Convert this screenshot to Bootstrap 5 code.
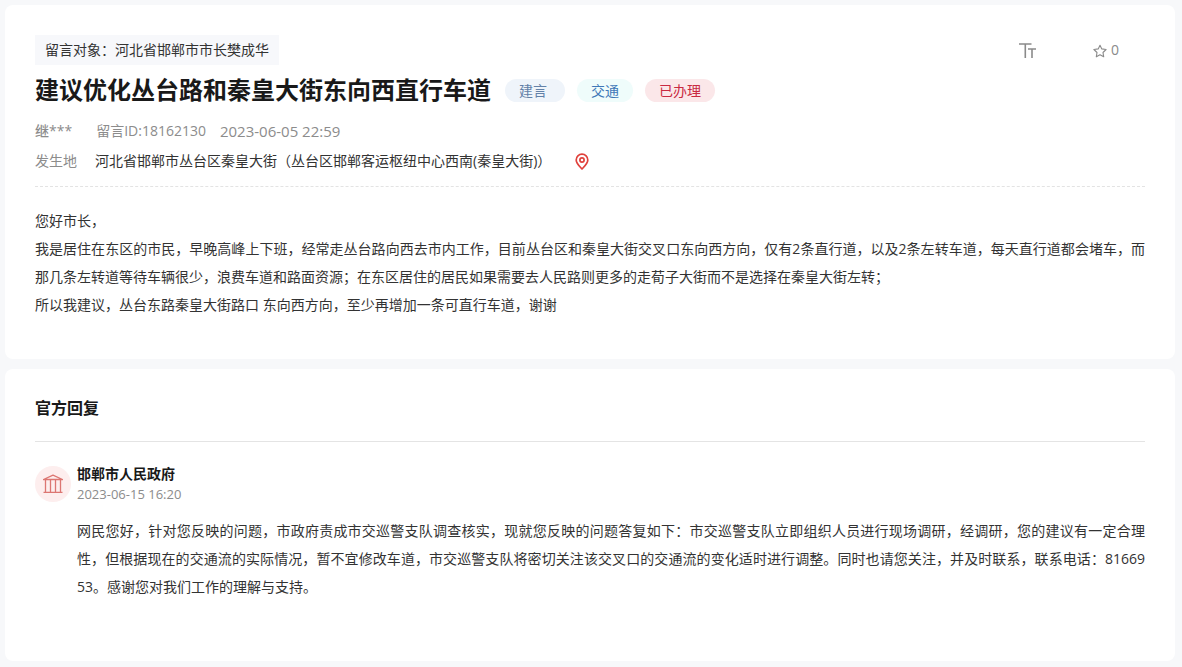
<!DOCTYPE html>
<html lang="zh-CN">
<head>
<meta charset="utf-8">
<meta name="viewport" content="width=device-width, initial-scale=1">
<title>建议优化丛台路和秦皇大街东向西直行车道</title>
<link href="https://cdn.jsdelivr.net/npm/bootstrap@5.3.0/dist/css/bootstrap.min.css" rel="stylesheet">
<style>
  body {
    background: #f7f8fa;
    color: #333;
    font-family: "Open Sans", "Noto Sans CJK SC", sans-serif;
    font-size: 14px;
    line-height: 30px;
  }
  .page { padding: 5px 7px 6px 5px; gap: 10px; }
  .panel { border: 0; border-radius: 8px; padding: 30px; color: inherit; }
  .panel-message { padding-bottom: 40px; }
  .panel-reply { padding-top: 24px; padding-bottom: 60px; }
  .target { background: #f7f8fb; padding: 0 10px; }
  .headline { font-size: 24px; line-height: 50px; font-weight: 700; color: #191919; }
  .tags { gap: 12px; margin-left: 14px; }
  .tag { padding: 0 14px; line-height: 23px; border-radius: 12px; }
  .tag-type { background: #eff4fa; color: #6381a8; padding-right: 18px; }
  .tag-topic { background: #effcfb; color: #3f78b8; }
  .tag-state { background: #fbe7e9; color: #c92a42; }
  .muted { color: #8c8c8c; }
  .meta { margin-top: 1px; }
  .author { font-weight: 500; }
  .id-label { margin-right: 14px; }
  .posted { font-size: 15px; }
  .place { padding-bottom: 10px; border-bottom: 1px dashed #e3e3e3; }
  .place-label { margin-right: 18px; }
  .tool { color: #8a8a8a; font-size: 14px; line-height: 30px; }
  .tools { gap: 56px; margin-right: 26px; }
  .prose { line-height: 28px; text-align: justify; word-break: break-all; }
  .message-text { margin-top: 20px; }
  .section-title { font-size: 16px; line-height: 30px; font-weight: 700; color: #191919; padding-bottom: 18px; border-bottom: 1px solid #e4e4e4; }
  .reply { gap: 6px; margin-top: 22px; }
  .avatar { width: 36px; height: 36px; background: #fdeeee; margin-top: 2px; }
  .dept { font-size: 14px; line-height: 20px; font-weight: 700; color: #191919; }
  .reply-date { font-size: 13px; line-height: 20px; }
  .reply-text { margin-top: 13px; }
</style>
</head>
<body>
<main class="page d-flex flex-column">
  <article class="card panel panel-message">
    <div class="d-flex justify-content-between align-items-start">
      <div class="target">留言对象：河北省邯郸市市长樊成华</div>
      <div class="tools d-flex align-items-center">
        <button type="button" class="tool btn p-0 border-0 d-flex align-items-center" aria-label="字体大小">
          <svg width="18" height="30" viewBox="0 0 18 30" fill="none" stroke="currentColor" stroke-width="1.6"><path d="M0 9h12.500M6.300 9V23M9 14h8M13 14V23"/></svg>
        </button>
        <button type="button" class="tool btn p-0 border-0 d-flex align-items-center gap-1">
          <svg width="14" height="16" viewBox="0 0 14 16" fill="none" stroke="currentColor" stroke-width="1.1" stroke-linejoin="round"><path d="M7 3.200l1.800 3.700 4.300.6-3.100 3 .7 4.300L7 12.800l-3.700 2 .7-4.300-3.100-3 4.300-.6z"/></svg>
          <span>0</span>
        </button>
      </div>
    </div>
    <div class="d-flex flex-wrap align-items-center">
      <h1 class="headline m-0">建议优化丛台路和秦皇大街东向西直行车道</h1>
      <div class="tags d-flex">
        <span class="tag tag-type">建言</span>
        <span class="tag tag-topic">交通</span>
        <span class="tag tag-state">已办理</span>
      </div>
    </div>
    <div class="meta muted d-flex flex-wrap">
      <span class="author me-4">继***</span>
      <span class="id-label">留言ID:18162130</span>
      <time class="posted" datetime="2023-06-05T22:59">2023-06-05 22:59</time>
    </div>
    <div class="place d-flex align-items-center">
      <span class="place-label muted">发生地</span>
      <span>河北省邯郸市丛台区秦皇大街（丛台区邯郸客运枢纽中心西南(秦皇大街)）</span>
      <a href="#" class="d-flex ms-4" aria-label="查看地图">
        <svg width="14" height="18" viewBox="0 0 14 18" fill="none" stroke="#e0413c" stroke-width="1.700" stroke-linejoin="round"><path d="M7 17C4.500 14.300 1.200 11.500 1.200 8a5.800 5.800 0 0 1 11.600 0C12.800 11.500 9.500 14.300 7 17z"/><circle cx="7" cy="8" r="2.100"/></svg>
      </a>
    </div>
    <div class="prose message-text">
      <p class="m-0">您好市长，</p>
      <p class="m-0">我是居住在东区的市民，早晚高峰上下班，经常走丛台路向西去市内工作，目前丛台区和秦皇大街交叉口东向西方向，仅有2条直行道，以及2条左转车道，每天直行道都会堵车，而那几条左转道等待车辆很少，浪费车道和路面资源；在东区居住的居民如果需要去人民路则更多的走荀子大街而不是选择在秦皇大街左转；</p>
      <p class="m-0">所以我建议，丛台东路秦皇大街路口 东向西方向，至少再增加一条可直行车道，谢谢</p>
    </div>
  </article>

  <section class="card panel panel-reply">
    <h2 class="section-title m-0">官方回复</h2>
    <div class="reply d-flex align-items-start">
      <div class="avatar rounded-circle d-flex align-items-center justify-content-center flex-shrink-0">
        <svg width="20" height="20" viewBox="0 0 20 20" fill="none" stroke="#dc7672" stroke-width="1.300" stroke-linejoin="round"><path d="M.5 5.500L10 1.200l9.500 4.300zM2.500 5.500V18M7.500 5.500V18M12.500 5.500V18M17.500 5.500V18M.5 18.400h19"/></svg>
      </div>
      <div class="flex-grow-1">
        <h3 class="dept m-0">邯郸市人民政府</h3>
        <time class="reply-date muted d-block" datetime="2023-06-15T16:20">2023-06-15 16:20</time>
        <p class="prose reply-text mb-0">网民您好，针对您反映的问题，市政府责成市交巡警支队调查核实，现就您反映的问题答复如下：市交巡警支队立即组织人员进行现场调研，经调研，您的建议有一定合理性，但根据现在的交通流的实际情况，暂不宜修改车道，市交巡警支队将密切关注该交叉口的交通流的变化适时进行调整。同时也请您关注，并及时联系，联系电话：8166953。感谢您对我们工作的理解与支持。</p>
      </div>
    </div>
  </section>
</main>
<script src="https://cdn.jsdelivr.net/npm/bootstrap@5.3.0/dist/js/bootstrap.bundle.min.js"></script>
</body>
</html>
